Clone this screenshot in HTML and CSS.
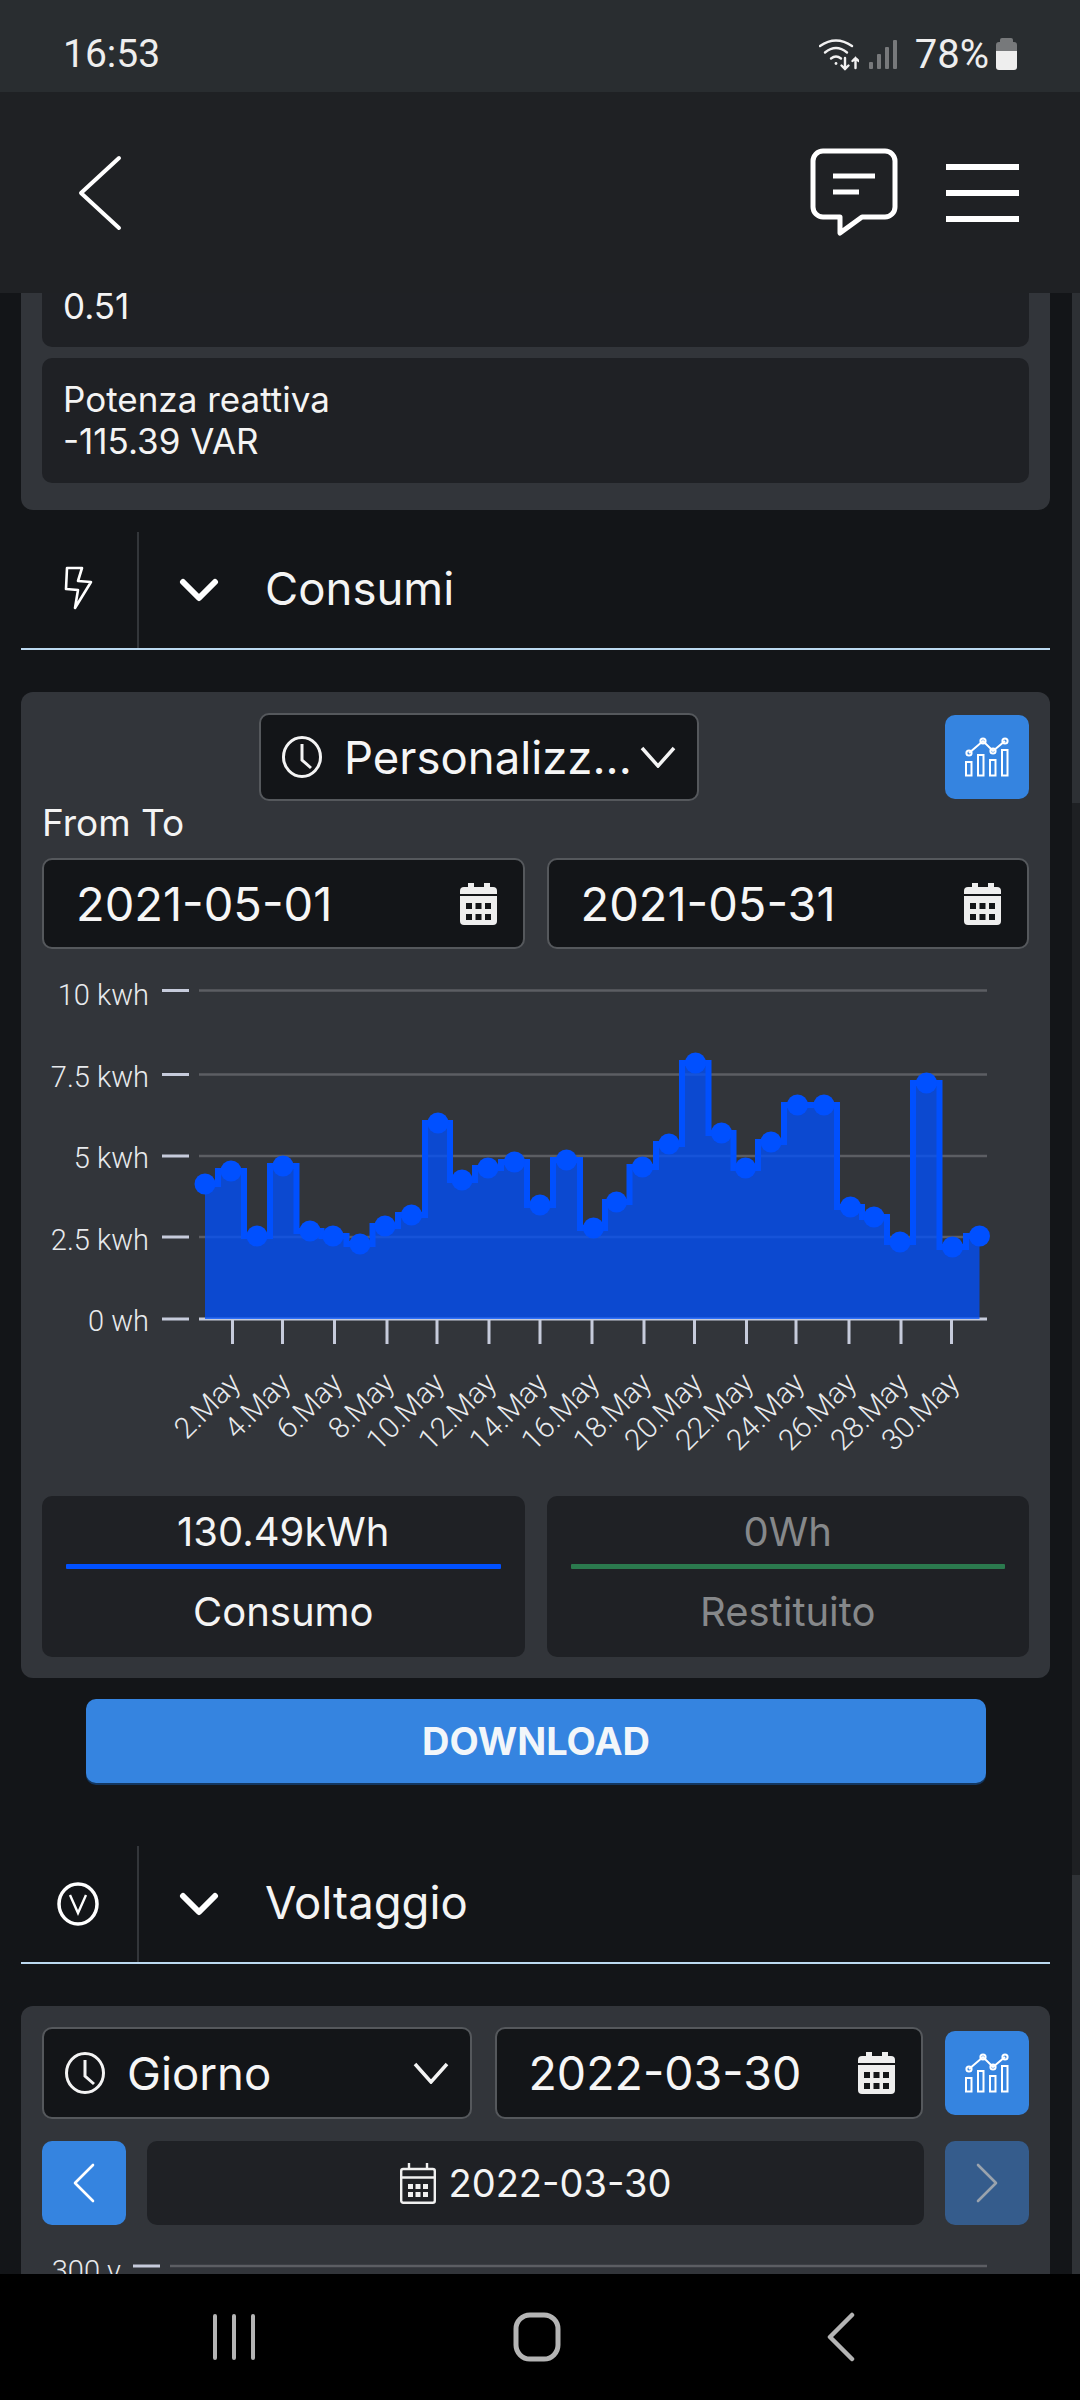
FILE: index.html
```html
<!DOCTYPE html>
<html lang="en">
<head>
    <meta charset="UTF-8">
    <meta name="viewport" content="width=device-width, initial-scale=1.0">
    <title>Consumi</title>
    <link rel="stylesheet" href="styles.css">
</head>
<body>
    <svg class="sprite">
        <symbol id="i-clock" viewBox="0 0 40 42">
            <ellipse cx="20" cy="21" rx="18.5" ry="19.5" fill="none" stroke="currentColor" stroke-width="3"/>
            <path d="M20 8V24L29 32" fill="none" stroke="currentColor" stroke-width="3"/>
        </symbol>
        <symbol id="i-down" viewBox="0 0 36 22">
            <path d="M2 2L18 20L34 2" fill="none" stroke="currentColor" stroke-width="3.5"/>
        </symbol>
        <symbol id="i-cal" viewBox="0 0 37 42">
            <rect x="8" y="0" width="6" height="8" fill="currentColor"/>
            <rect x="24" y="0" width="6" height="8" fill="currentColor"/>
            <path d="M4 4H33A4 4 0 0 1 37 8V11H0V8A4 4 0 0 1 4 4Z" fill="currentColor"/>
            <path d="M0 13H37V38A4 4 0 0 1 33 42H4A4 4 0 0 1 0 38Z" fill="currentColor"/>
            <g fill="#131518">
                <rect x="6" y="20" width="6" height="6"/><rect x="15.5" y="20" width="6" height="6"/><rect x="25" y="20" width="6" height="6"/>
                <rect x="6" y="31" width="6" height="6"/><rect x="15.5" y="31" width="6" height="6"/><rect x="25" y="31" width="6" height="6"/>
            </g>
        </symbol>
        <symbol id="i-chart" viewBox="0 0 44 40">
            <g fill="none" stroke="currentColor" stroke-width="2">
                <rect x="1" y="25" width="5.5" height="13.5"/>
                <rect x="13" y="18" width="5.5" height="20.5"/>
                <rect x="25" y="23" width="5.5" height="15.5"/>
                <rect x="37" y="13" width="5.5" height="25.5"/>
                <path d="M4 16L18 4L28 14L40 4"/>
                <circle cx="4" cy="16" r="2.6"/><circle cx="18" cy="4" r="2.6"/><circle cx="28" cy="14" r="2.6"/><circle cx="40" cy="4" r="2.6"/>
            </g>
        </symbol>
    </svg>

    <div class="phone">
        <div class="status-bar">
            <span class="clock">16:53</span>
            <div class="status-icons">
                <svg class="wifi" width="40" height="33" viewBox="0 0 40 33" fill="none" stroke="#f1f1f1" stroke-width="2.4" stroke-linecap="round">
                    <path d="M1 8Q17 -3 33 8"/>
                    <path d="M6 14.5Q17 5.5 28 14.5"/>
                    <path d="M12 20.5Q17 16.5 22 20.5"/>
                    <circle cx="17" cy="25.5" r="1.4" fill="#f1f1f1" stroke="none"/>
                    <path d="M26 20V31M22.5 27.5L26 31L29.5 27.5"/>
                    <path d="M36.5 30V20M33.5 23L36.5 20L39.5 23"/>
                </svg>
                <svg class="signal" width="28" height="29" viewBox="0 0 28 29" fill="#77797b">
                    <rect x="0" y="22" width="4" height="7" rx="1"/>
                    <rect x="8" y="14" width="4" height="15" rx="1"/>
                    <rect x="16" y="7" width="4" height="22" rx="1"/>
                    <rect x="24" y="0" width="4" height="29" rx="1"/>
                </svg>
                <span class="battery-text">78%</span>
                <svg width="21" height="32" viewBox="0 0 21 32">
                    <path d="M6 0H15A2 2 0 0 1 17 2V4H18A3 3 0 0 1 21 7V13H0V7A3 3 0 0 1 3 4H4V2A2 2 0 0 1 6 0Z" fill="#77797b"/>
                    <path d="M0 13H21V29A3 3 0 0 1 18 32H3A3 3 0 0 1 0 29Z" fill="#eeeeee"/>
                </svg>
            </div>
        </div>

        <header class="topbar">
            <svg width="44" height="76" viewBox="0 0 44 76" fill="none" stroke="#fff" stroke-width="4" stroke-linecap="round" stroke-linejoin="round">
                <path d="M41 3L3 38L41 73"/>
            </svg>
            <div class="topbar-right">
                <svg width="90" height="90" viewBox="0 0 90 90" fill="none" stroke="#fff" stroke-width="5" stroke-linejoin="round">
                    <path d="M13 3H75A10 10 0 0 1 85 13V59A10 10 0 0 1 75 69H52L30 85V69H13A10 10 0 0 1 3 59V13A10 10 0 0 1 13 3Z"/>
                    <path d="M23 28H65M23 44H49"/>
                </svg>
                <div class="menu"><span></span><span></span><span></span></div>
            </div>
        </header>

        <main class="content">
            <section class="card card-clipped">
                <div class="info info-first">0.51</div>
                <div class="info">Potenza reattiva<br>-115.39 VAR</div>
            </section>

            <div class="section-head">
                <div class="section-icon">
                    <svg width="34" height="48" viewBox="0 0 34 48" fill="none" stroke="#fff" stroke-width="2.6" stroke-linejoin="round">
                        <path d="M5 2H20L16 15L29 16L13 42L16 24L4 23Z"/>
                    </svg>
                </div>
                <svg class="section-chevron" width="40" height="24" viewBox="0 0 40 24" fill="none" stroke="#fff" stroke-width="6" stroke-linecap="round" stroke-linejoin="round">
                    <path d="M4 4L20 20L36 4"/>
                </svg>
                <span class="section-title">Consumi</span>
            </div>

            <section class="card card-consumi">
                <div class="row row-center">
                    <div class="select select-range">
                        <svg class="ico-clock"><use href="#i-clock"/></svg>
                        <span>Personalizz...</span>
                        <svg class="ico-down"><use href="#i-down"/></svg>
                    </div>
                    <button class="btn-blue btn-chart"><svg class="ico-chart"><use href="#i-chart"/></svg></button>
                </div>
                <div class="from-to">From To</div>
                <div class="row">
                    <div class="date-input grow"><span>2021-05-01</span><svg class="ico-cal"><use href="#i-cal"/></svg></div>
                    <div class="date-input grow"><span>2021-05-31</span><svg class="ico-cal"><use href="#i-cal"/></svg></div>
                </div>

                <svg class="chart" width="988" height="547" viewBox="42 949 988 547">
                    <g class="grid">
                        <path d="M199 990.5H987M199 1074.5H987M199 1156H987M199 1237H987"/>
                    </g>
                    <path class="axis-line" d="M162 990.5H189M162 1074.5H189M162 1156H189M162 1237H189M162 1319H189M199 1319H987"/>
                    <path class="axis-ticks" d="M232.5 1320V1344M282.5 1320V1344M334.5 1320V1344M387 1320V1344M437 1320V1344M489 1320V1344M540 1320V1344M592 1320V1344M644 1320V1344M694.5 1320V1344M746.5 1320V1344M796 1320V1344M849 1320V1344M901 1320V1344M951.5 1320V1344"/>
                    <g class="y-labels">
                        <text x="149" y="1005">10 kwh</text>
                        <text x="149" y="1087">7.5 kwh</text>
                        <text x="149" y="1168">5 kwh</text>
                        <text x="149" y="1250">2.5 kwh</text>
                        <text x="149" y="1331">0 wh</text>
                    </g>
                    <path class="area" d="M205 1184H218V1171H244V1236H270V1166H296.5V1231H321.5V1236H346.5V1244H372.5V1226H398V1215H425V1123H450V1180H475V1168H501V1162H527V1205H553V1160H580V1228H605V1202H629.5V1167H656V1144H682V1063H708.5V1133H733.5V1168H758V1142H784V1105H837V1207H862V1217H887V1242H913V1083H939.5V1247H966V1236H979.5V1319H205Z"/>
                    <path class="line" d="M205 1184H218V1171H244V1236H270V1166H296.5V1231H321.5V1236H346.5V1244H372.5V1226H398V1215H425V1123H450V1180H475V1168H501V1162H527V1205H553V1160H580V1228H605V1202H629.5V1167H656V1144H682V1063H708.5V1133H733.5V1168H758V1142H784V1105H837V1207H862V1217H887V1242H913V1083H939.5V1247H966V1236H979.5"/>
                    <g class="dots">
                        <circle cx="205" cy="1184" r="10.5"/><circle cx="231" cy="1171" r="10.5"/><circle cx="257" cy="1236" r="10.5"/><circle cx="283" cy="1166" r="10.5"/><circle cx="310" cy="1231" r="10.5"/><circle cx="333" cy="1236" r="10.5"/><circle cx="360" cy="1244" r="10.5"/><circle cx="385" cy="1226" r="10.5"/><circle cx="411.5" cy="1215" r="10.5"/><circle cx="438" cy="1123" r="10.5"/><circle cx="462" cy="1180" r="10.5"/><circle cx="488" cy="1168" r="10.5"/><circle cx="514.5" cy="1162" r="10.5"/><circle cx="540" cy="1205" r="10.5"/><circle cx="566.5" cy="1160" r="10.5"/><circle cx="593.5" cy="1228" r="10.5"/><circle cx="616.5" cy="1202" r="10.5"/><circle cx="642.5" cy="1167" r="10.5"/><circle cx="669" cy="1144" r="10.5"/><circle cx="695.5" cy="1063" r="10.5"/><circle cx="721.5" cy="1133" r="10.5"/><circle cx="745.5" cy="1168" r="10.5"/><circle cx="771" cy="1142" r="10.5"/><circle cx="797.5" cy="1105" r="10.5"/><circle cx="824" cy="1105" r="10.5"/><circle cx="850.5" cy="1207" r="10.5"/><circle cx="874" cy="1217" r="10.5"/><circle cx="900" cy="1242" r="10.5"/><circle cx="926.5" cy="1083" r="10.5"/><circle cx="952.5" cy="1247" r="10.5"/><circle cx="979.5" cy="1236" r="10.5"/>
                    </g>
                    <g class="x-labels">
                        <text transform="translate(242 1385) rotate(-45)">2.May</text>
                        <text transform="translate(292 1385) rotate(-45)">4.May</text>
                        <text transform="translate(344 1385) rotate(-45)">6.May</text>
                        <text transform="translate(396 1385) rotate(-45)">8.May</text>
                        <text transform="translate(446 1385) rotate(-45)">10.May</text>
                        <text transform="translate(498 1385) rotate(-45)">12.May</text>
                        <text transform="translate(549 1385) rotate(-45)">14.May</text>
                        <text transform="translate(601 1385) rotate(-45)">16.May</text>
                        <text transform="translate(653 1385) rotate(-45)">18.May</text>
                        <text transform="translate(704 1385) rotate(-45)">20.May</text>
                        <text transform="translate(755 1385) rotate(-45)">22.May</text>
                        <text transform="translate(806 1385) rotate(-45)">24.May</text>
                        <text transform="translate(858 1385) rotate(-45)">26.May</text>
                        <text transform="translate(910 1385) rotate(-45)">28.May</text>
                        <text transform="translate(961 1385) rotate(-45)">30.May</text>
                    </g>
                </svg>

                <div class="row">
                    <div class="summary grow">
                        <div class="summary-value">130.49kWh</div>
                        <div class="summary-bar bar-blue"></div>
                        <div class="summary-label">Consumo</div>
                    </div>
                    <div class="summary summary-off grow">
                        <div class="summary-value">0Wh</div>
                        <div class="summary-bar bar-green"></div>
                        <div class="summary-label">Restituito</div>
                    </div>
                </div>
            </section>

            <button class="download">DOWNLOAD</button>

            <div class="section-head section-volt">
                <div class="section-icon">
                    <svg width="44" height="44" viewBox="0 0 44 44" fill="none" stroke="#fff">
                        <ellipse cx="21" cy="22" rx="19" ry="20" stroke-width="3.5"/>
                        <path d="M13 13L21 31L29 13" stroke-width="2.4"/>
                    </svg>
                </div>
                <svg class="section-chevron" width="40" height="24" viewBox="0 0 40 24" fill="none" stroke="#fff" stroke-width="6" stroke-linecap="round" stroke-linejoin="round">
                    <path d="M4 4L20 20L36 4"/>
                </svg>
                <span class="section-title">Voltaggio</span>
            </div>

            <section class="card card-volt">
                <div class="row row-center">
                    <div class="select select-day">
                        <svg class="ico-clock"><use href="#i-clock"/></svg>
                        <span>Giorno</span>
                        <svg class="ico-down"><use href="#i-down"/></svg>
                    </div>
                    <div class="date-input date-day"><span>2022-03-30</span><svg class="ico-cal"><use href="#i-cal"/></svg></div>
                    <button class="btn-blue btn-chart"><svg class="ico-chart"><use href="#i-chart"/></svg></button>
                </div>
                <div class="row row-pager">
                    <button class="btn-blue">
                        <svg width="24" height="40" viewBox="0 0 24 40" fill="none" stroke="#fff" stroke-width="2.6" stroke-linecap="round" stroke-linejoin="round"><path d="M21 2L3 20L21 38"/></svg>
                    </button>
                    <div class="pager-date grow">
                        <svg width="36" height="41" viewBox="0 0 36 41" fill="none" stroke="#f0f0f0" stroke-width="2.4" stroke-linejoin="round">
                            <rect x="1.2" y="6" width="33.6" height="33.8" rx="2"/>
                            <path d="M1.2 14.5H34.8M9 0V6M27 0V6"/>
                            <g fill="#f0f0f0" stroke="none">
                                <rect x="8" y="21" width="5" height="5"/><rect x="15.5" y="21" width="5" height="5"/><rect x="23" y="21" width="5" height="5"/>
                                <rect x="8" y="29" width="5" height="5"/><rect x="15.5" y="29" width="5" height="5"/><rect x="23" y="29" width="5" height="5"/>
                            </g>
                        </svg>
                        <span>2022-03-30</span>
                    </div>
                    <button class="btn-blue btn-disabled">
                        <svg width="24" height="40" viewBox="0 0 24 40" fill="none" stroke="#9aa3ad" stroke-width="2.6" stroke-linecap="round" stroke-linejoin="round"><path d="M3 2L21 20L3 38"/></svg>
                    </button>
                </div>
                <svg class="chart" width="988" height="60" viewBox="42 2225 988 60">
                    <path class="grid-line" d="M170 2266H987"/>
                    <path class="axis-line" d="M133 2266H160"/>
                    <g class="y-labels"><text x="121" y="2281">300 v</text></g>
                </svg>
            </section>

            <div class="scrollbar"><i class="track-a"></i><i class="track-b"></i><i class="track-c"></i></div>
        </main>

        <nav class="navbar">
            <svg width="46" height="48" viewBox="0 0 46 48" fill="none" stroke="#b4b4b4" stroke-width="4" stroke-linecap="round"><path d="M4 3V45M23 3V45M42 3V45"/></svg>
            <svg width="48" height="50" viewBox="0 0 48 50" fill="none" stroke="#b4b4b4" stroke-width="5"><rect x="3" y="3" width="42" height="44" rx="14"/></svg>
            <svg width="30" height="50" viewBox="0 0 30 50" fill="none" stroke="#b4b4b4" stroke-width="4.5" stroke-linecap="round" stroke-linejoin="round"><path d="M26 3L4 25L26 47"/></svg>
        </nav>
    </div>
</body>
</html>
```

FILE: styles.css
```css
* {
    box-sizing: border-box;
}
body {
    margin: 0;
    background-color: #131518;
    color: #f4f4f4;
    font-family: Inter, "Liberation Sans", sans-serif;
}
button {
    border: none;
    padding: 0;
    font-family: inherit;
}
svg {
    display: block;
    flex-shrink: 0;
}
.sprite {
    display: none;
}
.phone {
    width: 1080px;
    height: 2400px;
    display: flex;
    flex-direction: column;
    overflow: hidden;
}

/* status bar */
.status-bar {
    height: 92px;
    flex-shrink: 0;
    background-color: #292d30;
    display: flex;
    align-items: center;
    justify-content: space-between;
    padding: 16px 63px 0 63px;
    font-family: Roboto, sans-serif;
    font-size: 39px;
    color: #eeeeee;
}
.status-icons {
    display: flex;
    align-items: center;
}
.signal {
    margin-left: 10px;
}
.battery-text {
    margin: 0 7px 0 18px;
    font-size: 40px;
}

/* top bar */
.topbar {
    height: 201px;
    flex-shrink: 0;
    background-color: #1f2124;
    display: flex;
    align-items: center;
    justify-content: space-between;
    padding: 0 61px 0 78px;
}
.topbar-right {
    display: flex;
    align-items: center;
    gap: 46px;
}
.menu {
    width: 73px;
    display: flex;
    flex-direction: column;
    gap: 20px;
}
.menu span {
    display: block;
    height: 6px;
    background-color: #fff;
}

/* main */
.content {
    flex: 1;
    min-height: 0;
    overflow: hidden;
    position: relative;
    padding: 0 30px 0 21px;
}
.card {
    background-color: #32353a;
    border-radius: 12px;
    padding: 21px;
}
.card-clipped {
    padding-top: 0;
    padding-bottom: 27px;
    border-radius: 0 0 12px 12px;
}
.info {
    background-color: #1f2125;
    border-radius: 10px;
    padding: 21px;
    font-size: 35px;
    line-height: 41.5px;
    margin-top: 11px;
}
.info-first {
    margin-top: 0;
    padding: 0 21px 28px;
    line-height: 26px;
    border-radius: 0 0 10px 10px;
}
.section-head {
    margin-top: 22px;
    height: 118px;
    border-bottom: 2px solid #bcd9f0;
    display: flex;
    align-items: center;
}
.section-volt {
    margin-top: 63px;
}
.section-icon {
    width: 118px;
    height: 100%;
    border-right: 2px solid #33363a;
    display: flex;
    align-items: center;
    justify-content: center;
}
.section-chevron {
    margin-left: 40px;
}
.section-title {
    margin-left: 46px;
    margin-bottom: 4px;
    font-size: 45.5px;
}
.card-consumi {
    margin-top: 42px;
}
.card-volt {
    margin-top: 42px;
    padding-bottom: 0;
}

/* form rows */
.row {
    display: flex;
    gap: 22px;
}
.row-center {
    align-items: center;
}
.row-pager {
    margin-top: 22px;
    gap: 21px;
}
.grow {
    flex: 1;
}
.select, .date-input {
    background-color: #131518;
    border: 2px solid #55585c;
    border-radius: 10px;
    display: flex;
    align-items: center;
    color: #f6f6f6;
}
.select {
    height: 88px;
    padding: 0 21px;
    font-size: 45.5px;
}
.select-range {
    width: 440px;
    margin-left: 217px;
    margin-right: auto;
}
.select-day {
    width: 431px;
    height: 92px;
}
.select span {
    margin-left: 22px;
    white-space: nowrap;
}
.ico-clock {
    width: 40px;
    height: 42px;
    color: #f4f4f4;
}
.ico-down {
    width: 36px;
    height: 22px;
    margin-left: auto;
    color: #f4f4f4;
}
.date-input {
    height: 91px;
    justify-content: space-between;
    padding: 0 26px 0 32px;
    font-size: 47px;
}
.date-day {
    width: 428px;
    height: 92px;
    margin-left: 1px;
    padding-left: 31px;
    font-size: 46.5px;
}
.ico-cal {
    width: 37px;
    height: 42px;
    color: #eeeeee;
}
.btn-blue {
    width: 84px;
    height: 84px;
    flex-shrink: 0;
    background-color: #3584e0;
    border-radius: 10px;
    display: flex;
    align-items: center;
    justify-content: center;
}
.btn-disabled {
    background-color: #355c8c;
}
.ico-chart {
    width: 44px;
    height: 40px;
    color: #fff;
}
.from-to {
    font-size: 37px;
    line-height: 42px;
    margin-top: 1px;
    margin-bottom: 14px;
}
.pager-date {
    background-color: #1f2125;
    border-radius: 10px;
    display: flex;
    align-items: center;
    justify-content: center;
    gap: 13px;
    font-size: 38px;
}

/* chart */
.chart text {
    font-family: Roboto, sans-serif;
    font-weight: 300;
    fill: #e8eaed;
}
.grid path, .grid-line {
    fill: none;
    stroke: #5c5e63;
    stroke-width: 2.5;
}
.axis-line, .axis-ticks {
    fill: none;
    stroke: #c6cbdb;
    stroke-width: 3;
}
.y-labels text {
    font-size: 29px;
    text-anchor: end;
}
.x-labels text {
    font-size: 29.5px;
    text-anchor: end;
}
.area {
    fill: #0050ff;
    fill-opacity: 0.76;
}
.line {
    fill: none;
    stroke: #0050ff;
    stroke-width: 6;
}
.dots circle {
    fill: #0050ff;
}

/* summary boxes */
.summary {
    height: 161px;
    background-color: #1f2125;
    border-radius: 10px;
    text-align: center;
    padding: 0 24px;
    font-size: 40px;
    color: #f4f4f4;
}
.summary-off {
    color: #86888a;
}
.summary-value {
    line-height: 44px;
    padding-top: 14px;
    height: 58px;
}
.summary-bar {
    height: 5px;
    margin-top: 10px;
    border-radius: 1px;
}
.bar-blue {
    background-color: #0050ff;
}
.bar-green {
    background-color: #2b7a4e;
}
.summary-label {
    line-height: 44px;
    margin-top: 21px;
}
.download {
    display: block;
    width: 900px;
    height: 84px;
    margin: 21px auto 0 65px;
    background-color: #3584e0;
    border-radius: 10px;
    color: #f2f6fa;
    font-size: 38px;
    font-weight: 700;
    box-shadow: 0 2px 0 #13365f;
}

/* overlay scrollbar */
.scrollbar {
    position: absolute;
    top: 0;
    right: 0;
    bottom: 0;
    width: 8px;
    display: flex;
    flex-direction: column;
}
.scrollbar i {
    display: block;
}
.track-a {
    height: 510px;
    background-color: #2d3034;
}
.track-b {
    height: 1072px;
    background-color: #1e2023;
}
.track-c {
    flex: 1;
    background-color: #2f3236;
}

/* nav bar */
.navbar {
    height: 126px;
    flex-shrink: 0;
    background-color: #000;
    display: flex;
    align-items: center;
}
.navbar svg:nth-child(1) {
    margin-left: 211px;
}
.navbar svg:nth-child(2) {
    margin-left: 256px;
}
.navbar svg:nth-child(3) {
    margin-left: 265px;
}
```
